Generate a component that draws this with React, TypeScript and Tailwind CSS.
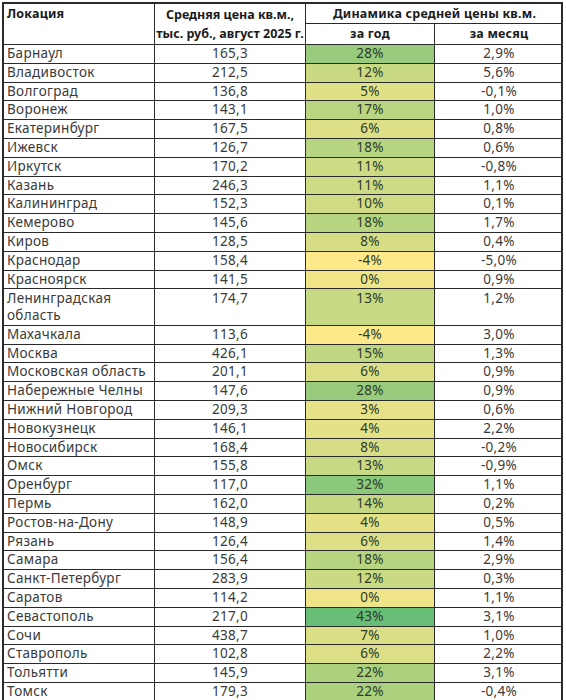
import React from "react";

type Row = [string, string, number, string, boolean?];

const rows: Row[] = [
  ["Барнаул", "165,3", 28, "2,9%"],
  ["Владивосток", "212,5", 12, "5,6%"],
  ["Волгоград", "136,8", 5, "-0,1%"],
  ["Воронеж", "143,1", 17, "1,0%"],
  ["Екатеринбург", "167,5", 6, "0,8%"],
  ["Ижевск", "126,7", 18, "0,6%"],
  ["Иркутск", "170,2", 11, "-0,8%"],
  ["Казань", "246,3", 11, "1,1%"],
  ["Калининград", "152,3", 10, "0,1%"],
  ["Кемерово", "145,6", 18, "1,7%"],
  ["Киров", "128,5", 8, "0,4%"],
  ["Краснодар", "158,4", -4, "-5,0%"],
  ["Красноярск", "141,5", 0, "0,9%"],
  ["Ленинградская область", "174,7", 13, "1,2%", true],
  ["Махачкала", "113,6", -4, "3,0%"],
  ["Москва", "426,1", 15, "1,3%"],
  ["Московская область", "201,1", 6, "0,9%"],
  ["Набережные Челны", "147,6", 28, "0,9%"],
  ["Нижний Новгород", "209,3", 3, "0,6%"],
  ["Новокузнецк", "146,1", 4, "2,2%"],
  ["Новосибирск", "168,4", 8, "-0,2%"],
  ["Омск", "155,8", 13, "-0,9%"],
  ["Оренбург", "117,0", 32, "1,1%"],
  ["Пермь", "162,0", 14, "0,2%"],
  ["Ростов-на-Дону", "148,9", 4, "0,5%"],
  ["Рязань", "126,4", 6, "1,4%"],
  ["Самара", "156,4", 18, "2,9%"],
  ["Санкт-Петербург", "283,9", 12, "0,3%"],
  ["Саратов", "114,2", 0, "1,1%"],
  ["Севастополь", "217,0", 43, "3,1%"],
  ["Сочи", "438,7", 7, "1,0%"],
  ["Ставрополь", "102,8", 6, "2,2%"],
  ["Тольятти", "145,9", 22, "3,1%"],
  ["Томск", "179,3", 22, "-0,4%"],
];

function scale(v: number): string {
  const t = (v + 4) / 47;
  const y = [253, 232, 138];
  const g = [104, 190, 118];
  const c = y.map((a, i) => Math.round(a + (g[i] - a) * t));
  return `rgb(${c[0]},${c[1]},${c[2]})`;
}

export default function App() {
  return (
    <div
      className="w-[566px] h-[700px] overflow-hidden bg-white pl-[2px] pt-[2px]"
      style={{ fontFamily: '"Noto Sans", "Open Sans", sans-serif' }}
    >
      <div className="w-[561px] border-l-2 border-t-2 border-r-2 border-[#2a2a2a]">
        {/* header */}
        <div className="grid grid-cols-[151px_151px_129px_128px] grid-rows-[20px_20px] border-b border-[#2a2a2a] text-[12.5px] font-bold tracking-[0.2px] text-[#1b1b1b] leading-[18px]">
          <div className="row-span-2 border-r border-[#2a2a2a] pl-[3px] pt-[1px]">Локация</div>
          <div className="row-span-2 border-r border-[#2a2a2a] text-center pt-[1px] leading-[19px] whitespace-nowrap tracking-normal">
            Средняя цена кв.м.,
            <br />
            тыс. руб., август 2025 г.
          </div>
          <div className="col-span-2 border-b border-[#2a2a2a] text-center pt-[1px]">
            Динамика средней цены кв.м.
          </div>
          <div className="border-r border-[#2a2a2a] text-center pt-[1px]">за год</div>
          <div className="text-center pt-[1px]">за месяц</div>
        </div>
        {rows.map(([name, price, year, month, dbl]) => (
          <div
            key={name}
            className={`grid grid-cols-[151px_151px_129px_128px] border-b border-[#2a2a2a] text-[13.5px] tracking-[0.3px] text-[#3a3a3a] ${
              dbl ? "h-[36.5px] leading-[17px]" : "h-[18.8px] leading-[17.8px]"
            }`}
          >
            <div className={`border-r border-[#2a2a2a] pl-[3px] ${dbl ? "pt-[1px]" : ""}`}>
              <span className={dbl ? "inline-block max-w-[120px]" : ""}>{name}</span>
            </div>
            <div className={`border-r border-[#2a2a2a] text-center ${dbl ? "pt-[1px]" : ""}`}>{price}</div>
            <div
              className={`border-r border-[#2a2a2a] text-center text-[#2f3a2a] ${dbl ? "pt-[1px]" : ""}`}
              style={{ backgroundColor: scale(year) }}
            >
              {year}%
            </div>
            <div className={`text-center ${dbl ? "pt-[1px]" : ""}`}>{month}</div>
          </div>
        ))}
      </div>
    </div>
  );
}
